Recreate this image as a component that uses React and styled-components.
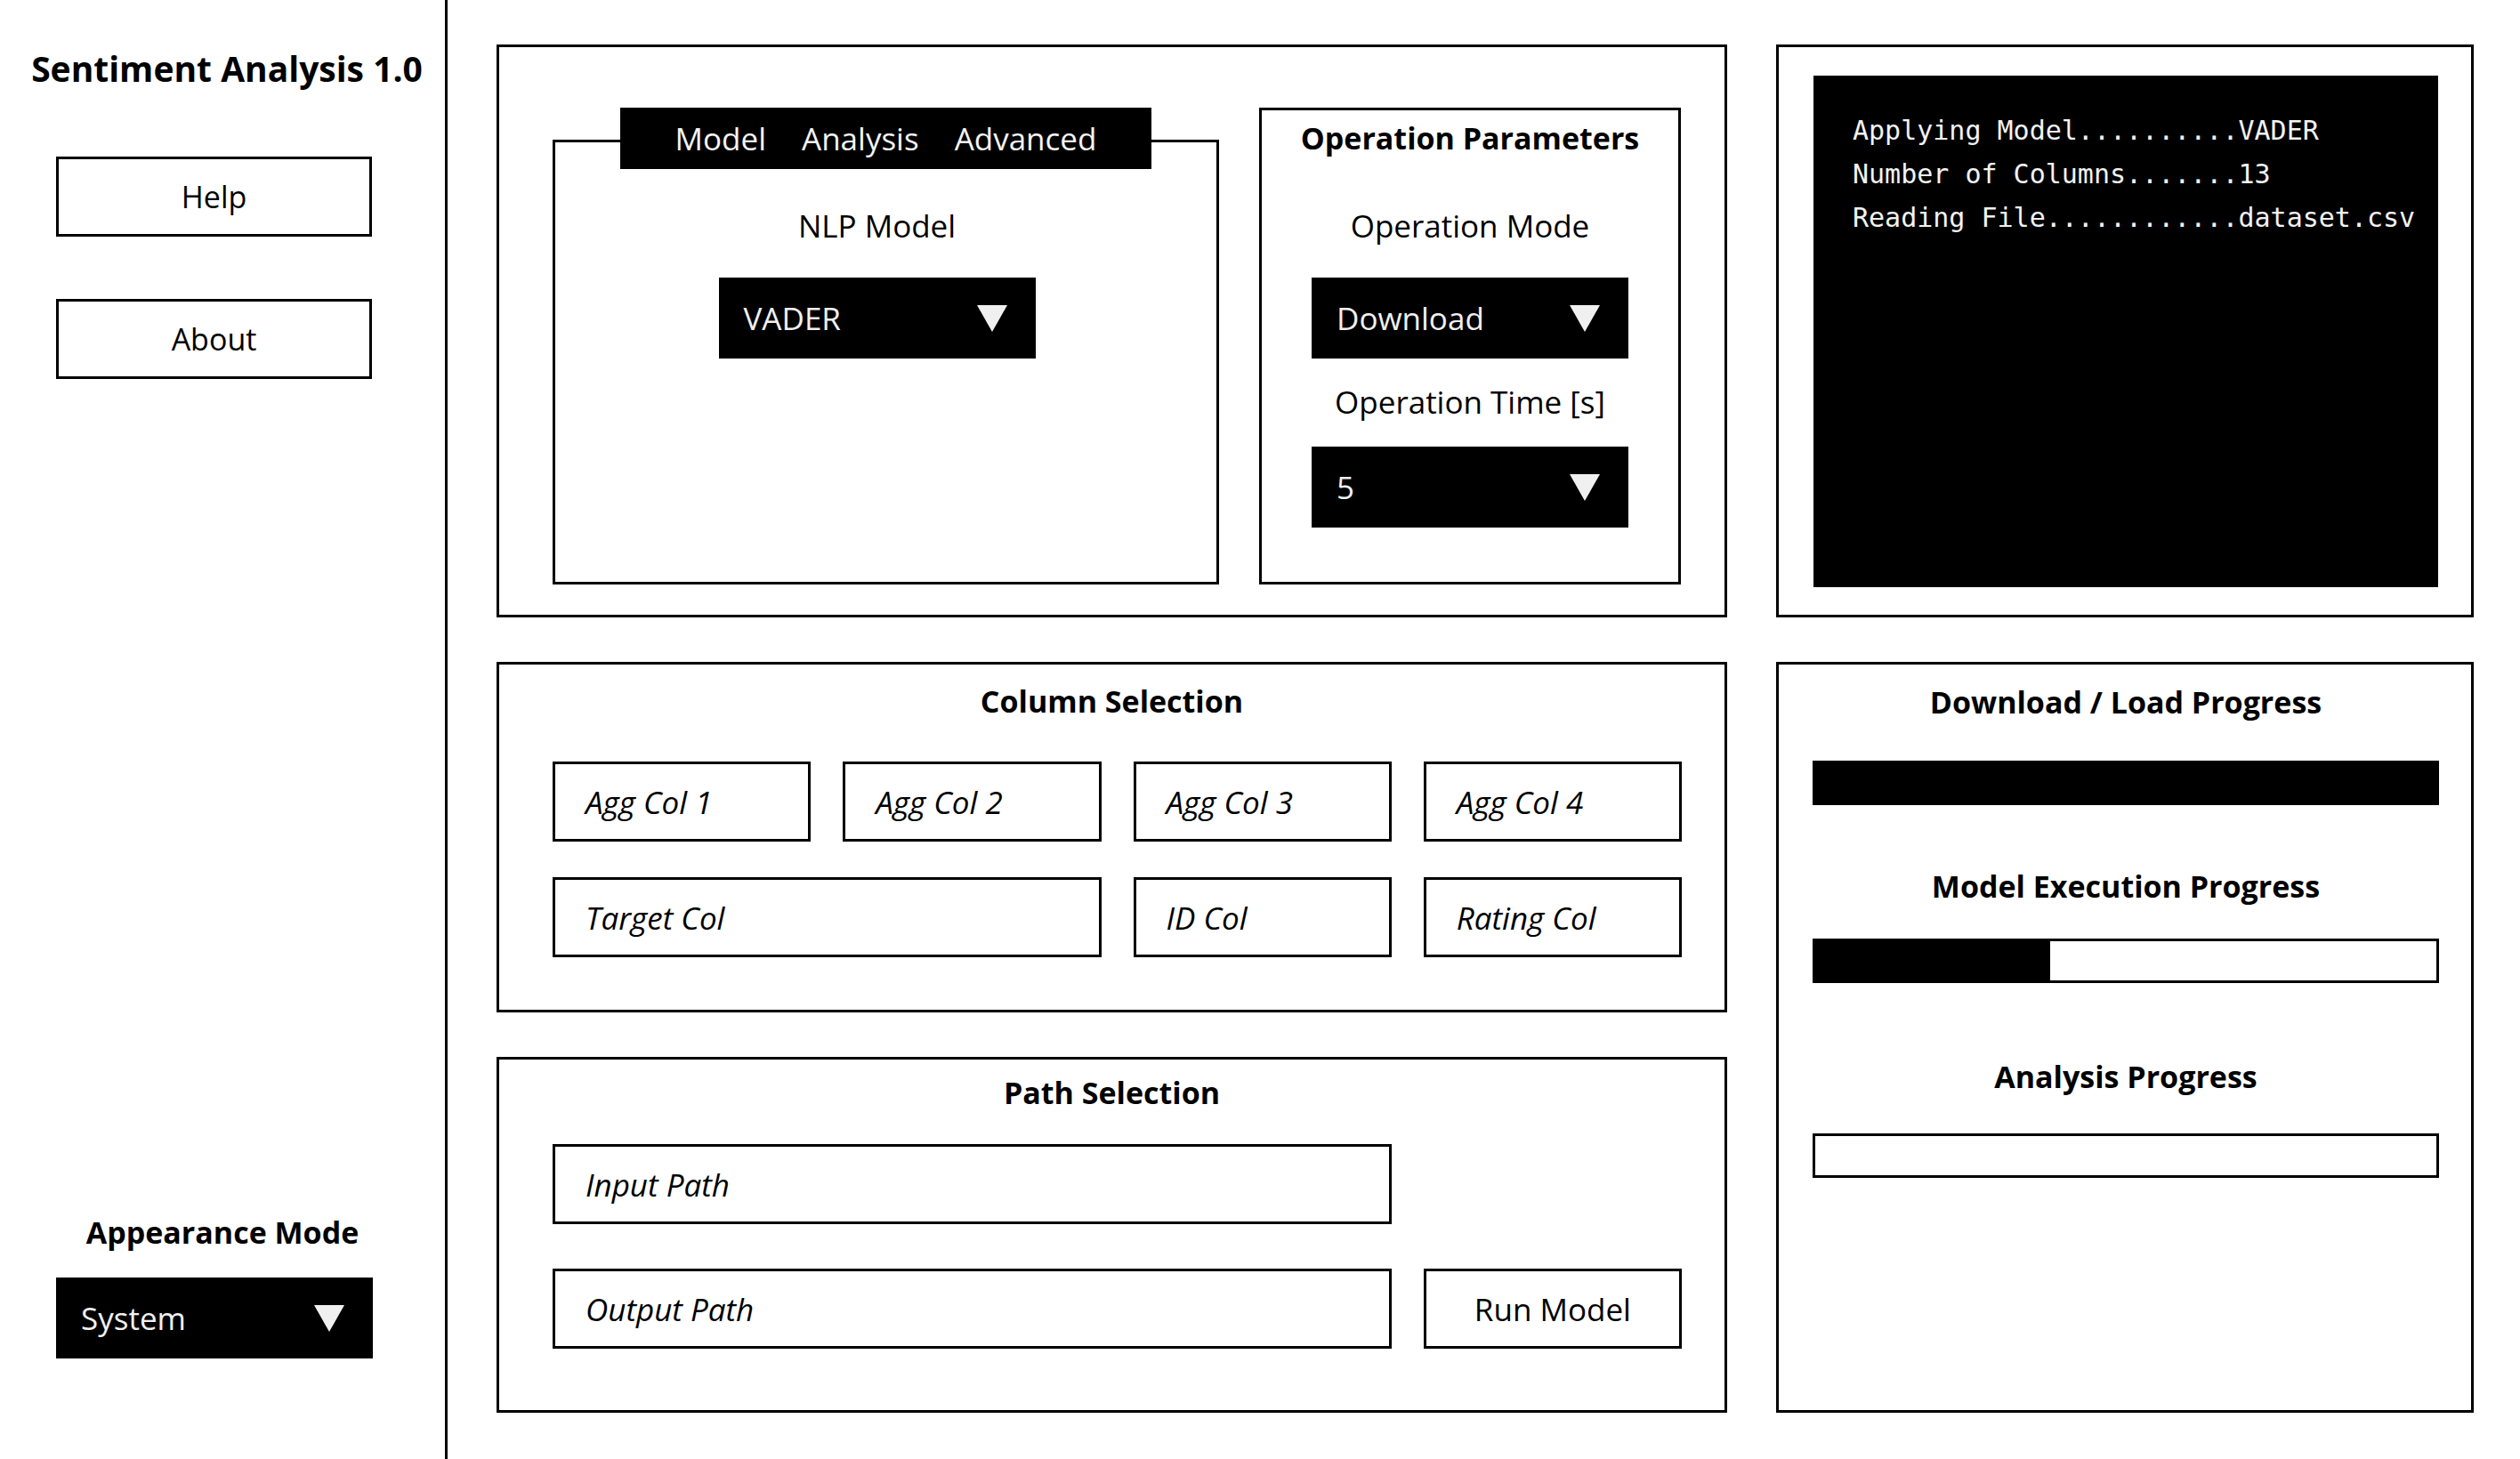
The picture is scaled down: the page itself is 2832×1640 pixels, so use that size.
import styled, { createGlobalStyle } from 'styled-components';

const GlobalStyle = createGlobalStyle`
    html, body {
        margin: 0;
        padding: 0;
        background: #ffffff;
    }
    body {
        font-family: 'Open Sans', 'DejaVu Sans', sans-serif;
        color: #000000;
    }
    * {
        box-sizing: border-box;
    }
`;

const consoleLines = [
    'Applying Model..........VADER',
    'Number of Columns.......13',
    'Reading File............dataset.csv',
];

const progress = [
    { title: 'Download / Load Progress', value: 1, top: 0, gap: 44 },
    { title: 'Model Execution Progress', value: 0.378, top: 69, gap: 37 },
    { title: 'Analysis Progress', value: 0, top: 83, gap: 42 },
];

function Caret() {
    return (
        <svg width="34" height="30" viewBox="0 0 34 30" aria-hidden="true">
            <polygon points="0,0 34,0 17,30" fill="#f0f0f0" />
        </svg>
    );
}

function Dropdown({ value }) {
    return (
        <DropdownStyled>
            <span>{value}</span>
            <Caret />
        </DropdownStyled>
    );
}

function App() {
    return (
        <>
            <GlobalStyle />
            <Screen>
                <Sidebar>
                    <AppTitle>Sentiment Analysis 1.0</AppTitle>
                    <ButtonStack>
                        <SideButton>Help</SideButton>
                        <SideButton>About</SideButton>
                    </ButtonStack>
                    <AppearanceBlock>
                        <AppearanceLabel>Appearance Mode</AppearanceLabel>
                        <Dropdown value="System" />
                    </AppearanceBlock>
                </Sidebar>

                <Main>
                    <ConfigPanel>
                        <TabView>
                            <TabBar>
                                <TabLabel>Model</TabLabel>
                                <TabLabel>Analysis</TabLabel>
                                <TabLabel>Advanced</TabLabel>
                            </TabBar>
                            <TabFrame>
                                <FieldLabel $gap={0}>NLP Model</FieldLabel>
                                <DropdownSlot $gap={35}>
                                    <Dropdown value="VADER" />
                                </DropdownSlot>
                            </TabFrame>
                        </TabView>
                        <ParamsBox>
                            <SectionTitle>Operation Parameters</SectionTitle>
                            <FieldLabel $gap={54}>Operation Mode</FieldLabel>
                            <DropdownSlot $gap={35}>
                                <Dropdown value="Download" />
                            </DropdownSlot>
                            <FieldLabel $gap={26}>Operation Time [s]</FieldLabel>
                            <DropdownSlot $gap={27}>
                                <Dropdown value="5" />
                            </DropdownSlot>
                        </ParamsBox>
                    </ConfigPanel>

                    <ConsolePanel>
                        <Console>
                            {consoleLines.map((line) => (
                                <ConsoleLine key={line}>{line}</ConsoleLine>
                            ))}
                        </Console>
                    </ConsolePanel>

                    <ColumnPanel>
                        <SectionTitle>Column Selection</SectionTitle>
                        <FieldGrid $top={46} $rowGap={40}>
                            <InputBox>Agg Col 1</InputBox>
                            <InputBox>Agg Col 2</InputBox>
                            <InputBox>Agg Col 3</InputBox>
                            <InputBox>Agg Col 4</InputBox>
                            <InputBox $span={2}>Target Col</InputBox>
                            <InputBox>ID Col</InputBox>
                            <InputBox>Rating Col</InputBox>
                        </FieldGrid>
                    </ColumnPanel>

                    <ProgressPanel>
                        {progress.map((item) => (
                            <ProgressGroup key={item.title} $top={item.top} $gap={item.gap}>
                                <SectionTitle>{item.title}</SectionTitle>
                                <ProgressTrack>
                                    <ProgressFill style={{ width: `${item.value * 100}%` }} />
                                </ProgressTrack>
                            </ProgressGroup>
                        ))}
                    </ProgressPanel>

                    <PathPanel>
                        <SectionTitle>Path Selection</SectionTitle>
                        <FieldGrid $top={36} $rowGap={50}>
                            <InputBox $span={3}>Input Path</InputBox>
                            <Spacer />
                            <InputBox $span={3}>Output Path</InputBox>
                            <RunButton>Run Model</RunButton>
                        </FieldGrid>
                    </PathPanel>
                </Main>
            </Screen>
        </>
    );
}

export default App;

const Screen = styled.div`
    display: flex;
    width: 2832px;
    height: 1640px;
    overflow: hidden;
`;

const Sidebar = styled.aside`
    width: 503px;
    flex-shrink: 0;
    display: flex;
    flex-direction: column;
    padding: 52px 0 113px 0;
    border-right: 3px solid #000000;
`;

const AppTitle = styled.h1`
    margin: 0;
    padding-left: 10px;
    text-align: center;
    font-size: 39px;
    line-height: 50px;
    font-weight: 700;
`;

const ButtonStack = styled.div`
    display: flex;
    flex-direction: column;
    gap: 70px;
    margin: 74px 0 0 63px;
`;

const SideButton = styled.button`
    width: 355px;
    height: 90px;
    padding: 0;
    border: 3px solid #000000;
    background: #ffffff;
    color: #000000;
    font-family: 'Open Sans', sans-serif;
    font-size: 34px;
`;

const AppearanceBlock = styled.div`
    margin-top: auto;
    display: flex;
    flex-direction: column;
    gap: 29px;
    padding-left: 63px;
`;

const AppearanceLabel = styled.div`
    margin-left: -63px;
    text-align: center;
    font-size: 34px;
    line-height: 44px;
    font-weight: 700;
`;

const DropdownStyled = styled.div`
    width: 356px;
    height: 91px;
    display: flex;
    align-items: center;
    justify-content: space-between;
    padding: 0 32px 0 28px;
    background: #000000;
    color: #f0f0f0;
    font-size: 35px;
`;

const Main = styled.main`
    display: grid;
    grid-template-columns: 1383px 784px;
    grid-template-rows: 644px 394px 400px;
    column-gap: 55px;
    row-gap: 50px;
    padding: 50px 0 0 55px;
`;

const Panel = styled.section`
    border: 3px solid #000000;
    background: #ffffff;
`;

const ConfigPanel = styled(Panel)`
    display: flex;
    align-items: flex-start;
    gap: 45px;
    padding: 68px 49px 0 60px;
`;

const TabView = styled.div`
    width: 749px;
    display: flex;
    flex-direction: column;
    align-items: center;
`;

const TabBar = styled.div`
    position: relative;
    z-index: 1;
    width: 597px;
    height: 69px;
    display: flex;
    align-items: center;
    justify-content: center;
    gap: 40px;
    background: #000000;
`;

const TabLabel = styled.span`
    color: #f4f4f4;
    font-size: 35px;
    line-height: 69px;
`;

const TabFrame = styled.div`
    width: 100%;
    height: 500px;
    margin-top: -33px;
    padding: 71px 20px 0 0;
    display: flex;
    flex-direction: column;
    align-items: center;
    border: 3px solid #000000;
`;

const ParamsBox = styled.div`
    width: 474px;
    height: 536px;
    display: flex;
    flex-direction: column;
    align-items: center;
    padding-top: 9px;
    border: 3px solid #000000;
`;

const SectionTitle = styled.h2`
    margin: 0;
    text-align: center;
    font-size: 34px;
    line-height: 44px;
    font-weight: 700;
`;

const FieldLabel = styled.div`
    margin-top: ${(p) => p.$gap}px;
    font-size: 35px;
    line-height: 46px;
`;

const DropdownSlot = styled.div`
    margin-top: ${(p) => p.$gap}px;
`;

const ConsolePanel = styled(Panel)`
    padding: 32px 37px 31px 39px;
`;

const Console = styled.div`
    height: 100%;
    padding: 37px 0 0 44px;
    background: #000000;
`;

const ConsoleLine = styled.div`
    color: #f2f2f2;
    font-family: 'DejaVu Sans Mono', 'Liberation Mono', monospace;
    font-size: 30px;
    line-height: 49px;
    white-space: pre;
`;

const ColumnPanel = styled(Panel)`
    padding-top: 19px;
`;

const PathPanel = styled(Panel)`
    padding-top: 15px;
`;

const FieldGrid = styled.div`
    display: grid;
    grid-template-columns: repeat(4, 1fr);
    grid-auto-rows: 90px;
    column-gap: 36px;
    row-gap: ${(p) => p.$rowGap}px;
    margin-top: ${(p) => p.$top}px;
    padding: 0 48px 0 60px;
`;

const InputBox = styled.div`
    grid-column: span ${(p) => p.$span || 1};
    display: flex;
    align-items: center;
    padding-left: 34px;
    border: 3px solid #000000;
    font-size: 35px;
    font-style: italic;
`;

const Spacer = styled.div``;

const RunButton = styled.button`
    padding: 0;
    border: 3px solid #000000;
    background: #ffffff;
    color: #000000;
    font-family: 'Open Sans', sans-serif;
    font-size: 35px;
`;

const ProgressPanel = styled(Panel)`
    grid-column: 2;
    grid-row: 2 / span 2;
    padding: 20px 36px 0 38px;
`;

const ProgressGroup = styled.div`
    display: flex;
    flex-direction: column;
    gap: ${(p) => p.$gap}px;
    margin-top: ${(p) => p.$top}px;
`;

const ProgressTrack = styled.div`
    height: 50px;
    border: 3px solid #000000;
    background: #ffffff;
`;

const ProgressFill = styled.div`
    height: 100%;
    background: #000000;
`;
